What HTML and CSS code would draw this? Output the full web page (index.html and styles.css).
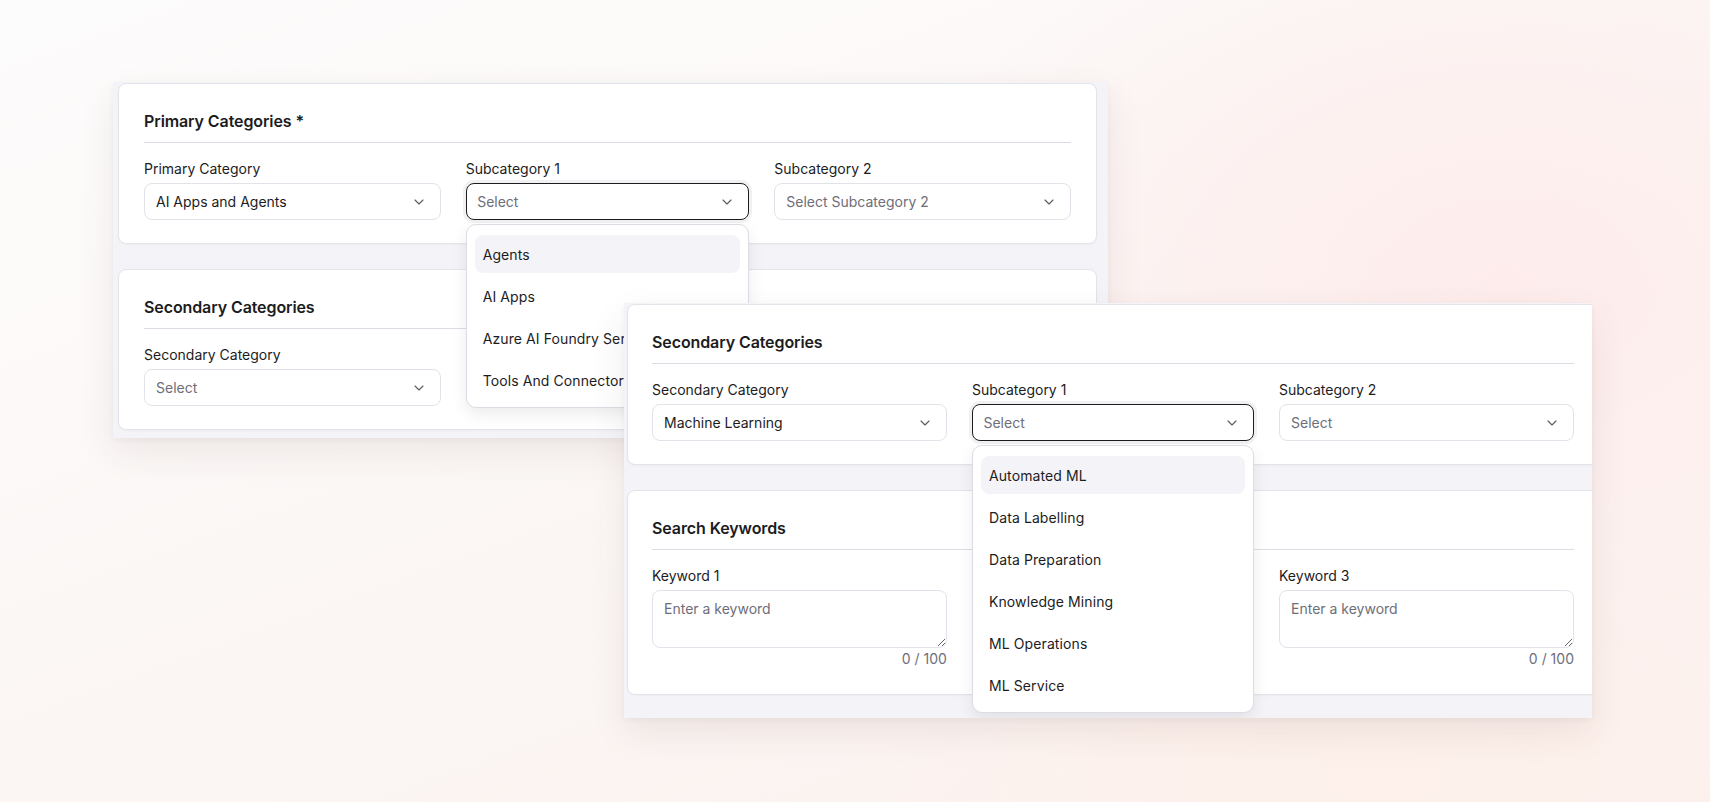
FILE: index.html
```html
<!DOCTYPE html>
<html lang="en">
<head>
    <meta charset="UTF-8">
    <meta name="viewport" content="width=device-width, initial-scale=1.0">
    <title>Categories</title>

    <link rel="stylesheet" href="styles.css">
</head>

<body>
    <!-- first window: primary categories with the subcategory list open -->
    <section class="window windowBack">
        <div class="stack">
            <div class="card">
                <h2 class="cardTitle">Primary Categories *</h2>
                <div class="row">
                    <div class="field">
                        <label>Primary Category</label>
                        <div class="select">
                            <span>AI Apps and Agents</span>
                            <svg class="chevron" width="10" height="6" viewBox="0 0 10 6"><path d="M1 1l4 4 4-4"/></svg>
                        </div>
                    </div>
                    <div class="field">
                        <label>Subcategory 1</label>
                        <div class="selectWrap">
                            <div class="select focused">
                                <span class="placeholder">Select</span>
                                <svg class="chevron" width="10" height="6" viewBox="0 0 10 6"><path d="M1 1l4 4 4-4"/></svg>
                            </div>
                            <ul class="menu">
                                <li class="active">Agents</li>
                                <li>AI Apps</li>
                                <li>Azure AI Foundry Ser</li>
                                <li>Tools And Connector</li>
                            </ul>
                        </div>
                    </div>
                    <div class="field">
                        <label>Subcategory 2</label>
                        <div class="select">
                            <span class="placeholder">Select Subcategory 2</span>
                            <svg class="chevron" width="10" height="6" viewBox="0 0 10 6"><path d="M1 1l4 4 4-4"/></svg>
                        </div>
                    </div>
                </div>
            </div>

            <div class="card">
                <h2 class="cardTitle">Secondary Categories</h2>
                <div class="row">
                    <div class="field">
                        <label>Secondary Category</label>
                        <div class="select">
                            <span class="placeholder">Select</span>
                            <svg class="chevron" width="10" height="6" viewBox="0 0 10 6"><path d="M1 1l4 4 4-4"/></svg>
                        </div>
                    </div>
                </div>
            </div>
        </div>
    </section>

    <!-- second window: secondary categories + keywords -->
    <section class="window windowFront">
        <div class="stack">
            <div class="card">
                <h2 class="cardTitle">Secondary Categories</h2>
                <div class="row">
                    <div class="field">
                        <label>Secondary Category</label>
                        <div class="select">
                            <span>Machine Learning</span>
                            <svg class="chevron" width="10" height="6" viewBox="0 0 10 6"><path d="M1 1l4 4 4-4"/></svg>
                        </div>
                    </div>
                    <div class="field">
                        <label>Subcategory 1</label>
                        <div class="selectWrap">
                            <div class="select focused">
                                <span class="placeholder">Select</span>
                                <svg class="chevron" width="10" height="6" viewBox="0 0 10 6"><path d="M1 1l4 4 4-4"/></svg>
                            </div>
                            <ul class="menu">
                                <li class="active">Automated ML</li>
                                <li>Data Labelling</li>
                                <li>Data Preparation</li>
                                <li>Knowledge Mining</li>
                                <li>ML Operations</li>
                                <li>ML Service</li>
                            </ul>
                        </div>
                    </div>
                    <div class="field">
                        <label>Subcategory 2</label>
                        <div class="select">
                            <span class="placeholder">Select</span>
                            <svg class="chevron" width="10" height="6" viewBox="0 0 10 6"><path d="M1 1l4 4 4-4"/></svg>
                        </div>
                    </div>
                </div>
            </div>

            <div class="card">
                <h2 class="cardTitle">Search Keywords</h2>
                <div class="row">
                    <div class="field">
                        <label for="kw1">Keyword 1</label>
                        <textarea id="kw1" placeholder="Enter a keyword"></textarea>
                        <p class="counter">0 / 100</p>
                    </div>
                    <div class="field"></div>
                    <div class="field">
                        <label for="kw3">Keyword 3</label>
                        <textarea id="kw3" placeholder="Enter a keyword"></textarea>
                        <p class="counter">0 / 100</p>
                    </div>
                </div>
            </div>
        </div>
    </section>
</body>
</html>
```

FILE: styles.css
```css
html,
body{
    margin: 0;
    height: 802px;
    overflow: hidden;
}
body{
    position: relative;
    font-family: Inter, "Noto Sans", sans-serif;
    color: #1c1c1e;
    background:
        radial-gradient(ellipse 900px 600px at 88% 35%, #fdeceb 0%, rgba(253,236,235,0) 70%),
        radial-gradient(ellipse 700px 400px at 80% 95%, #fdf0ea 0%, rgba(253,240,234,0) 70%),
        linear-gradient(160deg, #fdfcfc 0%, #fbf6f4 55%, #fcf1ee 100%);
}

/* windows floating on the canvas */
.window{
    position: absolute;
    overflow: hidden;
    background-color: #f4f4f8;
    box-shadow: 0 14px 34px rgba(90,60,60,0.09), 0 2px 6px rgba(0,0,0,0.04);
}
.windowBack{
    left: 113px;
    top: 82px;
    width: 995px;
    height: 356px;
    padding: 1px 11px 0 5px;
    box-sizing: border-box;
    z-index: 1;
}
.windowFront{
    left: 624px;
    top: 303px;
    width: 968px;
    height: 415px;
    padding: 1px 0 0 3px;
    box-sizing: border-box;
    z-index: 2;
}
.windowFront .stack{
    width: 973px;
}
.windowFront .card{
    padding-left: 24px;
}

.stack{
    display: flex;
    flex-direction: column;
    gap: 25px;
}

.card{
    background-color: #fff;
    border: 1px solid #e3e3ea;
    border-radius: 8px;
    padding: 27px 25px 23px;
    box-shadow: 0 1px 2px rgba(0,0,0,0.03);
}
.cardTitle{
    margin: 0;
    font-size: 16px;
    line-height: 20px;
    font-weight: 600;
    padding-bottom: 11px;
    border-bottom: 1px solid #dcdce4;
    letter-spacing: -0.1px;
}

.row{
    margin-top: 16px;
    display: grid;
    grid-template-columns: 297fr 284fr 297fr;
    gap: 25px;
}
.field label{
    display: block;
    font-size: 14px;
    line-height: 20px;
    margin-bottom: 4px;
}

.selectWrap{
    position: relative;
}
.select{
    height: 37px;
    box-sizing: border-box;
    border: 1px solid #e2e2ea;
    border-radius: 8px;
    background-color: #fff;
    padding: 0 16px 0 11px;
    display: flex;
    align-items: center;
    justify-content: space-between;
    font-size: 14px;
}
.select.focused{
    border: 1.5px solid #1d1d1f;
    padding-left: 10.5px;
    box-shadow: 0 0 0 3px rgba(120,120,140,0.1);
}
.placeholder{
    color: #6e6e7a;
}
.chevron{
    fill: none;
    stroke: #5a5a62;
    stroke-width: 1.1;
    stroke-linecap: round;
    stroke-linejoin: round;
}

/* open dropdown list */
.menu{
    position: absolute;
    top: calc(100% + 4px);
    left: 0;
    right: 0;
    z-index: 10;
    margin: 0;
    padding: 10px 8px 8px;
    list-style: none;
    background-color: #fff;
    border: 1px solid #dcdce4;
    border-radius: 10px;
    box-shadow: 0 6px 16px rgba(0,0,0,0.08);
    display: flex;
    flex-direction: column;
    gap: 4px;
}
.menu li{
    height: 38px;
    padding: 0 8px;
    border-radius: 8px;
    display: flex;
    align-items: center;
    font-size: 14px;
    letter-spacing: 0.1px;
    white-space: nowrap;
}
.menu li.active{
    background-color: #f4f4f8;
}

textarea{
    display: block;
    width: 100%;
    height: 58px;
    box-sizing: border-box;
    border: 1px solid #e2e2ea;
    border-radius: 8px;
    padding: 8px 11px;
    font-family: Inter, "Noto Sans", sans-serif;
    font-size: 14px;
    line-height: 20px;
    color: #1c1c1e;
    resize: vertical;
}
textarea::placeholder{
    color: #6e6e7a;
}
.counter{
    margin: 1px 0 2px;
    text-align: right;
    font-size: 14px;
    line-height: 20px;
    color: #6e6e7a;
}
```
